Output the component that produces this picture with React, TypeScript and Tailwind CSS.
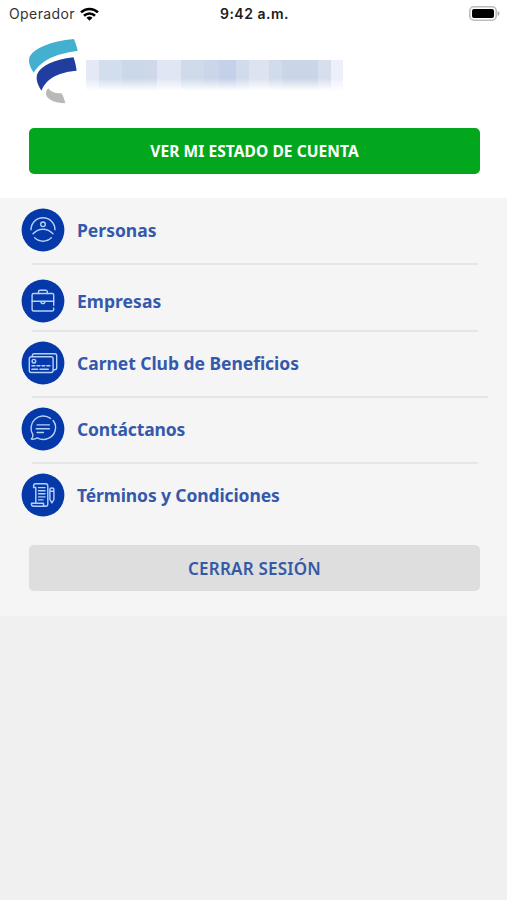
import type { ReactNode } from 'react';

type MenuItem = {
    label: string;
    icon: ReactNode;
    row: string;
    text: string;
    line?: string;
};

const PersonIcon = () => (
    <>
        <path d="M9.500 21.300a12 12 0 0 1 24 0" />
        <circle cx="21.500" cy="15.800" r="2.300" />
        <path d="M11.500 25.300c3-3.200 6.200-4.600 10-4.600s7 1.400 10 4.600" />
        <path d="M13.200 29.300c4.400 4.500 12.200 4.500 16.600 0" />
    </>
);

const BriefcaseIcon = () => (
    <>
        <path d="M32.200 28.500v1.500a1.500 1.500 0 0 1-1.500 1.500H12.100a1.500 1.500 0 0 1-1.500-1.500V15.500a1.500 1.500 0 0 1 1.500-1.500h18.600a1.500 1.500 0 0 1 1.500 1.500v10.300" />
        <path d="M17 14v-1.800a1.500 1.500 0 0 1 1.500-1.500h5.800a1.500 1.500 0 0 1 1.500 1.500V14M10.600 21.800h21.600M19.300 21.800c.2 1.500 1 2.300 2.100 2.300s1.900-.8 2.100-2.300" />
    </>
);

const CardsIcon = () => (
    <>
        <rect x="7.800" y="15.200" width="23.800" height="15.800" rx="2" />
        <path d="M10.800 15v-.7a2 2 0 0 1 2-2H33.200a2 2 0 0 1 2 2v11.900a2 2 0 0 1-2 2h-1.400" />
        <circle cx="12.400" cy="19.700" r="1.800" />
        <path d="M10.400 24.300h3m2-0h3m2 0h3m2 0h3M10.400 27.700h5.700m2.300 0h8.400" />
    </>
);

const ChatIcon = () => (
    <>
        <path d="M29 10.900a12.200 12.200 0 0 0-17.600 16.300c.2 1.700-.4 3.200-1.600 4.400 2.300.3 4.300-.1 6-1.200 7.300 4.100 15.900-.3 17.800-7.200 1.100-3.700.2-7.400-2-10.200" />
        <path d="M15.600 17.400h12.300M14.700 21.200h13.200M15.600 25h6.300" />
    </>
);

const TermsIcon = () => (
    <>
        <path d="M26.300 14.500v-2c0-1.500-.9-2.300-2.200-2.300H14c-1.200 0-1.900.9-1.900 2v1.800h2.200V29.500M26.300 14.500V30.500c0 1.600-.9 2.300-2.100 2.300H12.100c-1.400 0-2.100-.9-2.100-2v-1.100h12v1.100c0 1.100.7 2 1.800 2" />
        <path d="M17 14.100h6.500M17 17.200h6.500M17 20.300h6.500M17 23.400h6.500M17 26.400h4.500" />
        <path d="M28.400 16c0-2 4-2 4 0v10l-2 3.400-2-3.400zM28.400 17.800h4" />
    </>
);

const items: MenuItem[] = [
    { label: 'Personas', icon: <PersonIcon />, row: 'h-[67px] pt-2.5', text: 'tracking-normal', line: 'w-[446px]' },
    { label: 'Empresas', icon: <BriefcaseIcon />, row: 'h-[67px] pt-3.5', text: 'tracking-[0.050px]', line: 'w-[446px]' },
    { label: 'Carnet Club de Beneficios', icon: <CardsIcon />, row: 'h-[66px] pt-[9px]', text: 'tracking-[-0.040px]', line: 'w-[456px]' },
    { label: 'Contáctanos', icon: <ChatIcon />, row: 'h-[66px] pt-[9px]', text: 'tracking-[-0.150px]', line: 'w-[446px]' },
    { label: 'Términos y Condiciones', icon: <TermsIcon />, row: 'h-[81px] pt-[9px]', text: 'tracking-[-0.120px]' },
];

const StatusBar = () => (
    <div className="grid h-[27px] grid-cols-3 items-center pl-[9px] pr-[7px] font-['Inter',sans-serif] text-[14px]">
        <div className="flex items-center gap-[5px] text-[#333]">
            <span className="tracking-[0.400px]">Operador</span>
            <svg className="h-[14px] w-[19px]" viewBox="0 0 19 14" fill="none" stroke="#000" strokeWidth="2.600">
                <path d="M1 5.400c4.800-4.600 12.200-4.600 17 0" />
                <path d="M4 8.700c3.200-3 7.800-3 11 0" />
                <path d="M9.500 13.800 6.500 10.800c1.700-1.600 4.300-1.600 6 0z" fill="#000" stroke="none" />
            </svg>
        </div>
        <span className="text-center font-semibold tracking-[0.500px] text-[#1c1c1c]">9:42 a.m.</span>
        <svg className="h-[15px] w-[31px] justify-self-end" viewBox="0 0 31 15">
            <rect x=".8" y=".8" width="26.400" height="13.400" rx="4" fill="#fff" stroke="#bcbcbc" strokeWidth="1.600" />
            <rect x="3" y="3" width="22" height="9" rx="2" fill="#000" />
            <path d="M28.700 5c2.300.8 2.300 4.200 0 5z" fill="#a8a8a8" />
        </svg>
    </div>
);

const Logo = () => (
    <svg className="h-[66px] w-[50px] shrink-0" viewBox="0 0 50 66">
        <path d="M5.800 34.800C1 28 0 22 2 18 7 10 22 3.500 45.800 1c1.600 3 3 7.500 3.900 12C35 14.500 14.500 19.500 5.800 34.800Z" fill="#43b0cf" />
        <path d="M13.500 52.800C9 46 7.500 40 9.500 35.500 13 28 25 21.500 45.500 19.200c1.500 4 2.600 8.800 3.100 13.600C33.500 34 18.500 39 13.500 52.800Z" fill="#203d9f" />
        <path d="M20.300 50.300C16.500 54 17.500 58.500 22 61.500 26 64 31 65.300 37.300 65.300 36.500 61 35 58 33.500 55.300 28 55.500 23.500 54.500 20.300 50.300Z" fill="#b9b9b9" />
    </svg>
);

const App = () => {
    return (
        <div className="min-h-[900px] w-full bg-[#f0f0f0] font-['Noto_Sans',sans-serif]">
            <header className="h-[198px] bg-white">
                <StatusBar />
                <div className="mt-[11px] flex items-start pl-7">
                    <Logo />
                    {/* masked account name */}
                    <div className="ml-2 mt-[22px] flex h-[31px] w-[257px] mask-b-from-60% mask-b-to-100%">
                        <span className="w-[13px] bg-[#e4e9f5]" />
                        <span className="w-[23px] bg-[#d2dded]" />
                        <span className="w-[23px] bg-[#cbd8e9]" />
                        <span className="w-[12px] bg-[#cfd8ea]" />
                        <span className="w-[24px] bg-[#e1e6f4]" />
                        <span className="w-[23px] bg-[#cfdaeb]" />
                        <span className="w-[15px] bg-[#cbd6ea]" />
                        <span className="w-[17px] bg-[#c5d1ea]" />
                        <span className="w-[13px] bg-[#d2dbeb]" />
                        <span className="w-[20px] bg-[#dde3f0]" />
                        <span className="w-[13px] bg-[#d2dbec]" />
                        <span className="w-[36px] bg-[#cad5e8]" />
                        <span className="w-[13px] bg-[#d7dfef]" />
                        <span className="w-[12px] bg-[#edf0fa]" />
                    </div>
                </div>
                <button className="ml-[29px] mt-6 flex h-[46px] w-[451px] items-center justify-center rounded-[5px] bg-[#03a71e] pt-0.5 text-[15.500px] font-bold tracking-[0.080px] text-white">
                    VER MI ESTADO DE CUENTA
                </button>
            </header>

            <main className="h-[418px] bg-[#f5f5f5]">
                <nav>
                    {items.map((item) => (
                        <div key={item.label} className={`flex flex-col justify-between ${item.row}`}>
                            <a className="flex items-center gap-3 pl-[21px]">
                                <svg
                                    className="size-11 shrink-0"
                                    viewBox="-0.500 -0.500 44 44"
                                    fill="none"
                                    stroke="#b5d2fa"
                                    strokeWidth="1.400"
                                    strokeLinecap="round"
                                    strokeLinejoin="round"
                                >
                                    <circle cx="21.500" cy="21.500" r="21.400" fill="#0538a8" stroke="none" />
                                    {item.icon}
                                </svg>
                                <span className={`text-[17.500px] font-bold leading-6 whitespace-nowrap text-[#3459ac] ${item.text}`}>{item.label}</span>
                            </a>
                            {item.line && <div className={`ml-8 h-0.5 bg-[#e6e6e6] ${item.line}`} />}
                        </div>
                    ))}
                </nav>
                <button className="ml-[29px] flex h-[46px] w-[451px] items-center justify-center rounded-[5px] bg-[#dedede] pt-px text-[17px] font-semibold tracking-[0.200px] text-[#3459a5]">
                    CERRAR SESIÓN
                </button>
            </main>
        </div>
    );
};

export default App;
